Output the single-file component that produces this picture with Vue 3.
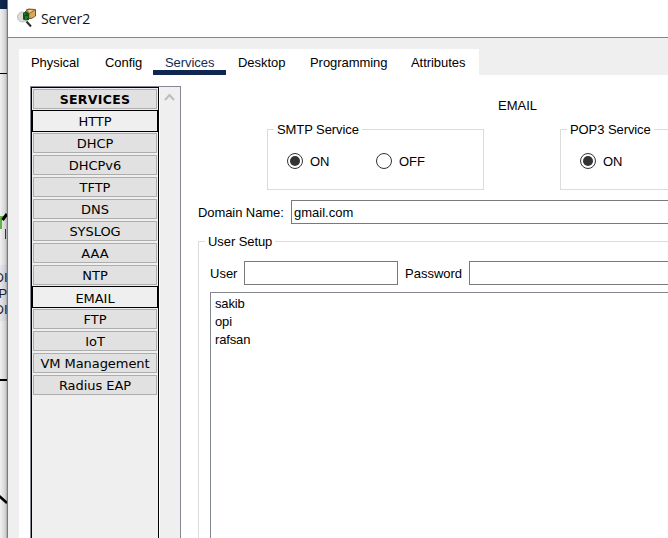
<script setup>
import { ref } from 'vue'

const tabs = [
  { name: 'Physical', width: 74 },
  { name: 'Config', width: 60 },
  { name: 'Services', width: 73 },
  { name: 'Desktop', width: 72 },
  { name: 'Programming', width: 101 },
  { name: 'Attributes', width: 80 },
]
const activeTab = ref('Services')
const services = ['HTTP', 'DHCP', 'DHCPv6', 'TFTP', 'DNS', 'SYSLOG', 'AAA', 'NTP', 'EMAIL', 'FTP', 'IoT', 'VM Management', 'Radius EAP']
const outlined = ['HTTP', 'EMAIL']
const users = ['sakib', 'opi', 'rafsan']
const smtp = ref('ON')
const domain = ref('gmail.com')
</script>

<template>
  <div class="screen">
    <svg class="backdrop" width="7" height="538" viewBox="0 0 7 538">
      <defs>
        <linearGradient id="shade" x1="0" x2="1" y1="0" y2="0">
          <stop offset="0" stop-color="#000" stop-opacity="0" />
          <stop offset=".75" stop-color="#000" stop-opacity=".12" />
          <stop offset="1" stop-color="#000" stop-opacity=".3" />
        </linearGradient>
      </defs>
      <rect width="7" height="538" fill="#f1f1f1" />
      <rect width="7" height="9" fill="#10284f" />
      <rect y="265" width="7" height="56" fill="#e7e8ef" />
      <rect y="73" width="7" height="1" fill="#000" />
      <path d="M0 216h4v4H2v9H0z" fill="#65b545" />
      <path d="M2.500 220l4.500-6" stroke="#000" stroke-width="3" />
      <path d="M5.500 229v10" stroke="#4b3340" />
      <g class="node-text">
        <text x="-5.500" y="282">DI</text>
        <text x="-1.500" y="298">P</text>
        <text x="-5.500" y="314">DI</text>
      </g>
      <rect y="379" width="7" height="2" fill="#000" />
      <path d="M-2 495l9 8" stroke="#000" stroke-width="2.500" />
      <rect width="7" height="538" fill="url(#shade)" />
    </svg>
    <div class="window">
      <header class="titlebar">
        <svg class="app-icon" width="20" height="20" viewBox="0 0 20 20">
          <circle cx="5.500" cy="9" r="5" fill="#dadbd8" stroke="#bdbdba" />
          <path d="M8 4l3-3 7.500.5V8l-4 2.500H8z" fill="#c08f45" stroke="#4e3516" stroke-width=".8" />
          <path d="M9.500 1.500h8.500l-5.500 4z" fill="#f0cc79" stroke="#76511f" stroke-width=".7" />
          <path d="M13 6l5-3.500V8l-4 2z" fill="#dba957" />
          <path d="M6 5l3-1.500 3 2v6.500l-3 .5-3-1z" fill="#12511a" />
          <path d="M7 6h2m-1 3h3m-3 2h2" stroke="#35a238" />
          <path d="M9.500 13.500l4.500 5" stroke="#292929" stroke-width="2" />
        </svg>
        <span class="title">Server2</span>
      </header>
      <div class="body">
        <nav class="tabs">
          <button
            v-for="tab in tabs" :key="tab.name" class="tab"
            :class="{ active: activeTab === tab.name }"
            :style="{ width: tab.width + 'px' }"
            @click="activeTab = tab.name"
          >{{ tab.name }}</button>
        </nav>
        <div class="panel">
          <aside class="sidebar">
            <div class="service-list">
              <div class="service heading">SERVICES</div>
              <div
                v-for="s in services" :key="s" class="service"
                :class="{ outlined: outlined.includes(s), email: s === 'EMAIL' }"
              ><span>{{ s }}</span></div>
            </div>
            <div class="scrollbar">
              <svg width="11" height="8" viewBox="0 0 11 8"><path d="M1 7L5.500 2L10 7" fill="none" stroke="#bdbdbd" stroke-width="2" /></svg>
            </div>
          </aside>
          <main class="content">
            <div class="page-title">EMAIL</div>
            <div class="groups">
              <section class="group smtp">
                <span class="legend">SMTP Service</span>
                <div class="options">
                  <label v-for="o in ['ON', 'OFF']" :key="o" class="option" @click="smtp = o">
                    <span class="radio" :class="{ checked: smtp === o }"></span><span class="option-text">{{ o }}</span>
                  </label>
                </div>
              </section>
              <section class="group pop">
                <span class="legend">POP3 Service</span>
                <div class="options">
                  <label class="option"><span class="radio checked"></span><span class="option-text">ON</span></label>
                </div>
              </section>
            </div>
            <div class="domain">
              <span class="domain-label">Domain Name:</span>
              <input v-model="domain" class="field grow">
            </div>
            <section class="group setup">
              <span class="legend">User Setup</span>
              <div class="credentials">
                <span class="user-label">User</span>
                <input class="field user">
                <span class="password-label">Password</span>
                <input class="field grow">
              </div>
              <ul class="users">
                <li v-for="u in users" :key="u">{{ u }}</li>
              </ul>
            </section>
          </main>
        </div>
      </div>
    </div>
  </div>
</template>

<style>
html, body { margin: 0; overflow: hidden; }
</style>

<style scoped>
* { box-sizing: border-box; }
.screen {
  display: flex; width: 668px; height: 538px; overflow: hidden;
  font: 13px/16px "Liberation Sans", Arial, sans-serif; color: #000; background: #fff;
}
.backdrop { flex: none; display: block; }
.node-text { font: 13px "Liberation Sans", sans-serif; fill: #24202c; }
.window { flex: 1; min-width: 0; border-left: 1px solid #777b82; display: flex; flex-direction: column; }
.titlebar {
  height: 38px; flex: none; display: flex; align-items: flex-start; padding: 8px 0 0 9px;
  border-bottom: 1px solid #82858d; background: #fff;
}
.app-icon { flex: none; }
.title { margin-left: 4px; font: 14px/22px "Open Sans", sans-serif; color: #111; letter-spacing: -.1px; }
.body { flex: 1; min-height: 0; background: #efefef; padding: 11px 0 0 11px; display: flex; flex-direction: column; }
.tabs { display: flex; height: 26px; flex: none; }
.tab {
  flex: none; border: 0; padding: 6px 0 0 12px; background: #fff; font: inherit; color: #000;
  border-bottom: 5px solid #fff; white-space: nowrap; text-align: left; letter-spacing: -.05px;
}
.tab.active { color: #152c52; border-bottom-color: #10284f; }
.panel { flex: 1; min-height: 0; background: #fff; padding: 11px 0 0 11px; display: flex; }
.sidebar { width: 151px; flex: none; display: flex; border: 1px solid #848891; border-bottom: 0; }
.service-list {
  width: 128px; background: #efefef; border: 1px solid #000; border-bottom: 0;
  padding: 1px; display: flex; flex-direction: column; gap: 2px;
}
.service {
  height: 20px; flex: none; background: #e1e1e1; border: 1px solid #adadad; text-align: center;
  font: 13px/19px "DejaVu Sans", Verdana, sans-serif; white-space: nowrap; letter-spacing: -.05px;
}
.heading { font-weight: bold; font-size: 12.500px; letter-spacing: .3px; }
.outlined { height: 22px; margin: -1px; background: #efefef; border-color: #000; line-height: 21px; }
.email { line-height: 23px; }
.scrollbar { flex: 1; margin-left: 1px; background: #efefef; padding: 6px 0 0 4px; }
.scrollbar svg { display: block; }
.content { flex: 1; min-width: 0; padding: 11px 0 0 17px; display: flex; flex-direction: column; }
.page-title { height: 16px; padding: 1px 0 0 300px; }
.groups { display: flex; gap: 76px; margin: 16px 0 0 69px; height: 61px; flex: none; }
.group { border: 1px solid #dcdcdc; }
.legend { display: block; width: fit-content; margin: -8px 0 0 6px; padding: 0 3px; background: #fff; white-space: nowrap; letter-spacing: -.08px; }
.smtp { width: 217px; flex: none; }
.pop { flex: 1; border-right: 0; }
.options { display: flex; padding: 15px 0 0 19px; }
.option { display: flex; align-items: center; gap: 7px; width: 89px; height: 16px; }
.option-text { padding-top: 1px; }
.radio { width: 16px; height: 16px; border: 1px solid #333; border-radius: 50%; display: grid; place-items: center; }
.checked::after { content: ""; width: 10px; height: 10px; border-radius: 50%; background: #333; }
.domain { display: flex; align-items: center; height: 24px; margin-top: 10px; flex: none; }
.domain-label { width: 93px; padding-top: 2px; letter-spacing: -.08px; }
.field { height: 24px; min-width: 0; border: 1px solid #7a7a7a; border-radius: 0; padding: 0 2px; font: inherit; background: #fff; outline: none; }
.grow { flex: 1; border-right: 0; }
.setup { flex: 1; min-height: 0; margin-top: 17px; border-right: 0; border-bottom: 0; display: flex; flex-direction: column; }
.credentials { display: flex; align-items: center; height: 24px; margin: 11px 0 0 11px; flex: none; }
.user-label { width: 34px; padding-top: 2px; }
.user { width: 154px; }
.password-label { width: 71px; padding: 2px 0 0 7px; }
.users { flex: 1; margin: 7px 0 0 11px; padding: 2px 0 0 4px; border: 1px solid #828790; border-right: 0; border-bottom: 0; list-style: none; line-height: 18px; letter-spacing: -.15px; }
</style>
